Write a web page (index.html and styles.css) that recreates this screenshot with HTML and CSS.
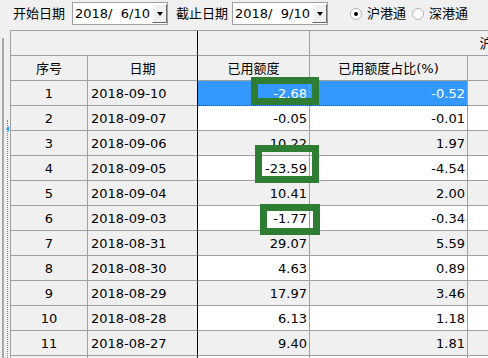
FILE: index.html
```html
<!DOCTYPE html>
<html lang="zh-CN">
<head>
    <meta charset="UTF-8">
    <meta name="viewport" content="width=device-width, initial-scale=1.0">
    <title>额度查询</title>
    <link rel="stylesheet" href="styles.css">
</head>
<body>
    <div class="toolbar">
        <span class="label">开始日期</span>
        <div class="combo combo-start">
            <span class="combo-text">2018/  6/10</span>
            <span class="combo-btn"></span>
        </div>
        <span class="label label-end">截止日期</span>
        <div class="combo combo-end">
            <span class="combo-text">2018/  9/10</span>
            <span class="combo-btn"></span>
        </div>
        <span class="radio radio-first checked"></span>
        <span class="radio-text">沪港通</span>
        <span class="radio"></span>
        <span class="radio-text">深港通</span>
    </div>

    <div class="main">
        <div class="gutter">
            <div class="gutter-line"></div>
            <div class="gutter-dots"></div>
        </div>

        <div class="grid">
            <div class="row band">
                <div class="cell band-fixed"></div>
                <div class="cell"></div>
                <div class="cell band-title">沪港通</div>
            </div>
            <div class="row head">
                <div class="cell">序号</div>
                <div class="cell sep">日期</div>
                <div class="cell">已用额度</div>
                <div class="cell">已用额度占比(%)</div>
                <div class="cell"></div>
            </div>
            <div class="row odd selected">
                <div class="cell fixed no">1</div>
                <div class="cell fixed sep date">2018-09-10</div>
                <div class="cell num pick">-2.68</div>
                <div class="cell num pick">-0.52</div>
                <div class="cell"></div>
            </div>
            <div class="row">
                <div class="cell fixed no">2</div>
                <div class="cell fixed sep date">2018-09-07</div>
                <div class="cell num">-0.05</div>
                <div class="cell num">-0.01</div>
                <div class="cell"></div>
            </div>
            <div class="row odd">
                <div class="cell fixed no">3</div>
                <div class="cell fixed sep date">2018-09-06</div>
                <div class="cell num">10.22</div>
                <div class="cell num">1.97</div>
                <div class="cell"></div>
            </div>
            <div class="row">
                <div class="cell fixed no">4</div>
                <div class="cell fixed sep date">2018-09-05</div>
                <div class="cell num">-23.59</div>
                <div class="cell num">-4.54</div>
                <div class="cell"></div>
            </div>
            <div class="row odd">
                <div class="cell fixed no">5</div>
                <div class="cell fixed sep date">2018-09-04</div>
                <div class="cell num">10.41</div>
                <div class="cell num">2.00</div>
                <div class="cell"></div>
            </div>
            <div class="row">
                <div class="cell fixed no">6</div>
                <div class="cell fixed sep date">2018-09-03</div>
                <div class="cell num">-1.77</div>
                <div class="cell num">-0.34</div>
                <div class="cell"></div>
            </div>
            <div class="row odd">
                <div class="cell fixed no">7</div>
                <div class="cell fixed sep date">2018-08-31</div>
                <div class="cell num">29.07</div>
                <div class="cell num">5.59</div>
                <div class="cell"></div>
            </div>
            <div class="row">
                <div class="cell fixed no">8</div>
                <div class="cell fixed sep date">2018-08-30</div>
                <div class="cell num">4.63</div>
                <div class="cell num">0.89</div>
                <div class="cell"></div>
            </div>
            <div class="row odd">
                <div class="cell fixed no">9</div>
                <div class="cell fixed sep date">2018-08-29</div>
                <div class="cell num">17.97</div>
                <div class="cell num">3.46</div>
                <div class="cell"></div>
            </div>
            <div class="row">
                <div class="cell fixed no">10</div>
                <div class="cell fixed sep date">2018-08-28</div>
                <div class="cell num">6.13</div>
                <div class="cell num">1.18</div>
                <div class="cell"></div>
            </div>
            <div class="row odd">
                <div class="cell fixed no">11</div>
                <div class="cell fixed sep date">2018-08-27</div>
                <div class="cell num">9.40</div>
                <div class="cell num">1.81</div>
                <div class="cell"></div>
            </div>
            <!-- next row only peeks in at the bottom edge -->
            <div class="row">
                <div class="cell fixed no"></div>
                <div class="cell fixed sep date"></div>
                <div class="cell num"></div>
                <div class="cell num"></div>
                <div class="cell"></div>
            </div>
        </div>
    </div>

    <!-- annotation boxes drawn over the grid -->
    <div class="mark mark-1"></div>
    <div class="mark mark-2"></div>
    <div class="mark mark-3"></div>
</body>
</html>
```

FILE: styles.css
```css
* {
    box-sizing: border-box;
}
body {
    margin: 0;
    width: 488px;
    height: 358px;
    overflow: hidden;
    position: relative;
    background: #f0f0f0; /* classic dialog grey */
    font-family: "DejaVu Sans", "Noto Sans CJK SC", sans-serif;
    font-size: 13px;
    color: #000;
}

/* top filter bar */
.toolbar {
    display: flex;
    align-items: flex-start;
    height: 30px;
    padding: 2px 0 0 13px;
}
.label {
    height: 23px;
    line-height: 23px;
    white-space: nowrap;
}
.label-end {
    margin-left: 8px;
}
.combo {
    display: flex;
    flex: none;
    width: 96px;
    height: 23px;
    margin-left: 7px;
    padding-left: 2px;
    background: #fff;
    border: 1px solid #a0a0a0;
}
.combo-end {
    margin-left: 4px;
}
.combo-text {
    flex: 1;
    line-height: 21px;
    white-space: pre;
    overflow: hidden;
}
.combo-btn {
    display: flex;
    align-items: center;
    justify-content: center;
    flex: none;
    width: 15px;
    height: 19px;
    margin: 1px 0;
    background: #f0f0f0;
    border: 1px solid;
    border-color: #fcfcfc #696969 #696969 #fcfcfc;
}
.combo-btn::after {
    content: "";
    border-left: 3px solid transparent;
    border-right: 3px solid transparent;
    border-top: 4px solid #000;
}
.radio {
    display: flex;
    align-items: center;
    justify-content: center;
    flex: none;
    width: 12px;
    height: 12px;
    margin: 6px 0 0 6px;
    border-radius: 50%;
    background: #fff;
    border: 1px solid #b4b4b4;
}
.radio-first {
    margin-left: 22px;
}
.radio.checked::after {
    content: "";
    width: 4px;
    height: 4px;
    border-radius: 50%;
    background: #000;
}
.radio-text {
    margin-left: 5px;
    line-height: 23px;
    white-space: nowrap;
}

/* grid area */
.main {
    display: flex;
    height: 328px;
}
.gutter {
    display: flex;
    flex: none;
    width: 10px;
}
.gutter-line {
    width: 2px;
    margin: 8px 0 0 2px;
    background: #a9a9a9;
}
.gutter-dots {
    position: relative;
    margin: 90px 0 0 3px;
    border-left: 1px dotted #3399ff;
}
.gutter-dots::before {
    content: "";
    position: absolute;
    top: 6px;
    left: -2px;
    border-top: 3px solid transparent;
    border-bottom: 3px solid transparent;
    border-right: 3px solid #3399ff;
}
.grid {
    flex: none;
    border-left: 1px solid #a0a0a0;
    border-top: 1px solid #a0a0a0;
}
.row {
    display: grid;
    grid-template-columns: 77px 110px 112px 158px 221px;
    height: 25px;
}
.cell {
    padding: 2px 2px 0;
    line-height: 22px;
    white-space: nowrap;
    overflow: hidden;
    background: #fff;
    border-right: 1px solid #a0a0a0;
    border-bottom: 1px solid #a0a0a0;
}
.row.odd .cell,
.head .cell,
.band .cell,
.cell.fixed {
    background: #f0f0f0;
}
.cell.sep,
.band-fixed {
    border-right-color: #000; /* frozen column divider */
}
.band-fixed {
    grid-column: span 2;
}
.band-title {
    grid-column: span 2;
    text-align: center;
}
.head .cell {
    text-align: center;
}
.no {
    text-align: center;
}
.date {
    padding-left: 3px;
}
.num {
    text-align: right;
}
.row.selected .pick {
    background: #3399ff;
    color: #fff;
    border-bottom: 1px dotted #1f4f7f;
}

/* green highlight boxes */
.mark {
    position: absolute;
    border: 7px solid #2e7d32;
}
.mark-1 {
    left: 251px;
    top: 77px;
    width: 68px;
    height: 28px;
}
.mark-2 {
    left: 255px;
    top: 145px;
    width: 64px;
    height: 38px;
}
.mark-3 {
    left: 260px;
    top: 204px;
    width: 60px;
    height: 31px;
}
```
